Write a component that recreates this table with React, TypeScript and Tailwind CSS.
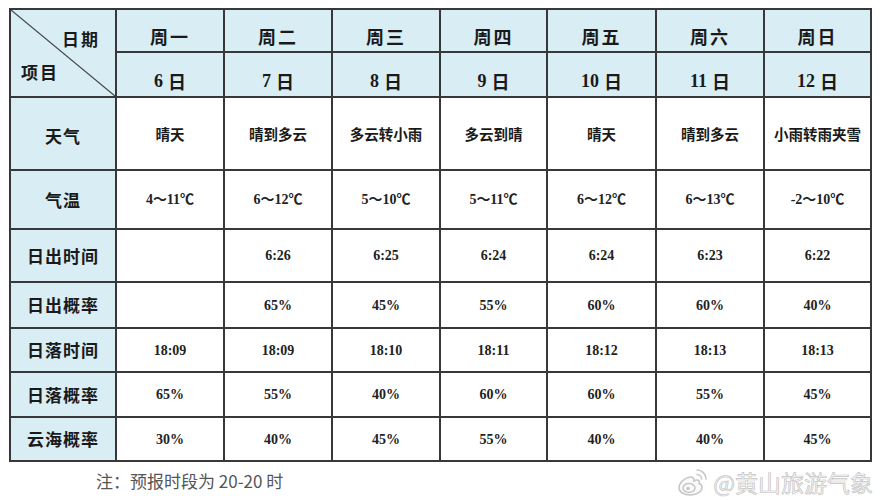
import React from "react";

const CJK = "font-['Noto_Sans_CJK_SC','Noto_Sans',sans-serif]";
const SERIF = "font-['Liberation_Serif','Noto_Sans_CJK_SC',serif]";
const HEAD_BG = "bg-[#d9edf5]";

const DAYS = [
  { week: "周一", date: "6" },
  { week: "周二", date: "7" },
  { week: "周三", date: "8" },
  { week: "周四", date: "9" },
  { week: "周五", date: "10" },
  { week: "周六", date: "11" },
  { week: "周日", date: "12" },
];

const WEATHER = ["晴天", "晴到多云", "多云转小雨", "多云到晴", "晴天", "晴到多云", "小雨转雨夹雪"];

const ROWS: { label: string; values: string[] }[] = [
  { label: "气温", values: ["4～11℃", "6～12℃", "5～10℃", "5～11℃", "6～12℃", "6～13℃", "-2～10℃"] },
  { label: "日出时间", values: ["", "6:26", "6:25", "6:24", "6:24", "6:23", "6:22"] },
  { label: "日出概率", values: ["", "65%", "45%", "55%", "60%", "60%", "40%"] },
  { label: "日落时间", values: ["18:09", "18:09", "18:10", "18:11", "18:12", "18:13", "18:13"] },
  { label: "日落概率", values: ["65%", "55%", "40%", "60%", "60%", "55%", "45%"] },
  { label: "云海概率", values: ["30%", "40%", "45%", "55%", "40%", "40%", "45%"] },
];

function WeiboLogo() {
  return (
    <svg width="32" height="30" viewBox="0 0 32 30" aria-hidden>
      <g fill="#fafafa" stroke="#c6c6c6" strokeWidth="1.5" strokeLinecap="round">
        <path d="M13 10c-6 1-11 6-11 11 0 4 5 7 11 7s12-3 12-8c0-2-1-3-3-3.5 1-2 0-3.5-2-3.5-1 0-2 .4-3 1 .3-2-1-4.5-4-4z" />
        <ellipse cx="12" cy="21" rx="6" ry="4.5" />
        <circle cx="11" cy="21.5" r="1.8" fill="#c6c6c6" stroke="none" />
        <path d="M20 3a9 9 0 0 1 9 9" fill="none" />
        <path d="M20 7.5a4.5 4.5 0 0 1 4.5 4.5" fill="none" />
      </g>
    </svg>
  );
}

export default function App() {
  return (
    <div className={`relative h-[500px] w-[881px] overflow-hidden bg-white ${CJK}`}>
      <div className="pl-[9px] pt-[8px]">
        <div className="grid w-fit grid-cols-[104px_106px_106px_106px_105px_107px_106px_105px] grid-rows-[41px_43px_71px_57px_51px_44px_42px_43px_42px] gap-[2px] border-2 border-[#383838] bg-[#383838] text-[#1a1a1a]">
          <div className={`relative row-span-2 flex flex-col ${HEAD_BG}`}>
            <svg className="absolute inset-0 h-full w-full" preserveAspectRatio="none" viewBox="0 0 104 86" aria-hidden>
              <line x1="0" y1="0" x2="104" y2="86" stroke="#444" strokeWidth="1.2" />
            </svg>
            <span className="self-end pr-[15px] pt-[19px] text-[17px] font-bold leading-[20px] tracking-[2px]">日期</span>
            <span className="mt-[13px] self-start pl-[10px] text-[17px] font-bold leading-[20px] tracking-[2px]">项目</span>
          </div>
          {DAYS.map((d) => (
            <div key={d.week} className={`flex items-center justify-center pt-[11px] ${HEAD_BG} text-[18px] font-bold leading-none tracking-[2px]`}>
              {d.week}
            </div>
          ))}
          {DAYS.map((d) => (
            <div key={d.date} className={`flex items-center justify-center pt-[13px] ${HEAD_BG} text-[18px] font-bold leading-none`}>
              <span className={SERIF}>{d.date}</span>
              <span className="ml-[5px]">日</span>
            </div>
          ))}

          <div className={`flex items-center justify-center pt-[4px] ${HEAD_BG} text-[17px] font-bold tracking-[1px]`}>天气</div>
          {WEATHER.map((w, i) => (
            <div key={i} className="flex items-center justify-center bg-white text-[14.5px] font-bold">
              {w}
            </div>
          ))}

          {ROWS.map((row) => (
            <React.Fragment key={row.label}>
              <div className={`flex items-center justify-center ${HEAD_BG} text-[17px] font-bold tracking-[1px]`}>
                {row.label}
              </div>
              {row.values.map((v, i) => (
                <div key={i} className={`flex items-center justify-center bg-white ${SERIF} text-[14px] font-bold text-[#222]`}>
                  {v}
                </div>
              ))}
            </React.Fragment>
          ))}
        </div>
      </div>

      <div className="flex h-[38px] items-center">
        <p className="pl-[96px] text-[17px] text-[#555]">注：预报时段为 20-20 时</p>
        <div className="ml-auto flex items-center gap-[4px] pr-[8px] pt-[2px]">
          <WeiboLogo />
          <span className="text-[23px] leading-none text-[#f9f9f9] [-webkit-text-stroke:0.7px_#c4c4c4]">@黄山旅游气象</span>
        </div>
      </div>
    </div>
  );
}
